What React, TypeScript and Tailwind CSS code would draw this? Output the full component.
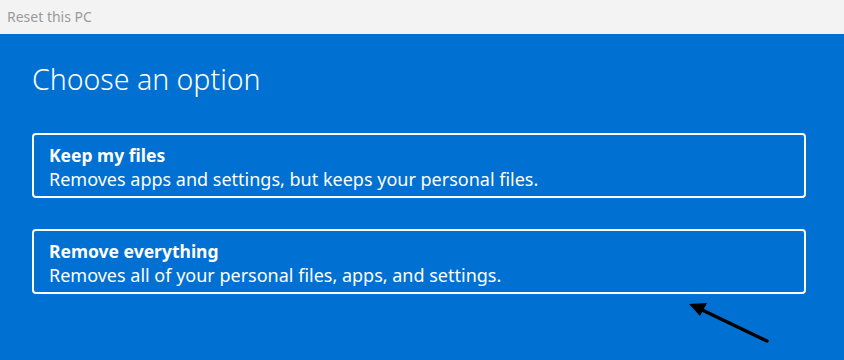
import React from 'react';

const options = [
  { title: 'Keep my files', desc: 'Removes apps and settings, but keeps your personal files.' },
  { title: 'Remove everything', desc: 'Removes all of your personal files, apps, and settings.' },
];

export default function App() {
  return (
    <div className="w-[844px] h-[360px] flex flex-col overflow-hidden font-['Noto_Sans',sans-serif]">
      <div className="h-[34px] shrink-0 bg-[#f3f3f3] px-[7px] pt-[6px] text-[14px] text-[#9a9a9a]">Reset this PC</div>
      <div className="relative flex-1 bg-[#0070d2] pl-[32px] pr-[38px] pt-[26px]">
        <h1 className="text-[28.5px] font-light leading-[38px] text-white">Choose an option</h1>
        <div className="mt-[35px] flex flex-col gap-[31px]">
          {options.map((o) => (
            <div key={o.title} className="h-[65px] rounded-[4px] border-2 border-white px-[15px] pt-[9px] text-white">
              <div className="text-[17.5px] font-bold leading-[22px]">{o.title}</div>
              <div className="text-[18px] leading-[26px]">{o.desc}</div>
            </div>
          ))}
        </div>
        <svg className="absolute left-[684px] top-[266px]" width="90" height="46" viewBox="0 0 90 46">
          <line x1="83" y1="41" x2="14" y2="8" stroke="black" strokeWidth="3.5" strokeLinecap="round" />
          <polygon points="5,4 23,3 16,16" fill="black" />
        </svg>
      </div>
    </div>
  );
}
